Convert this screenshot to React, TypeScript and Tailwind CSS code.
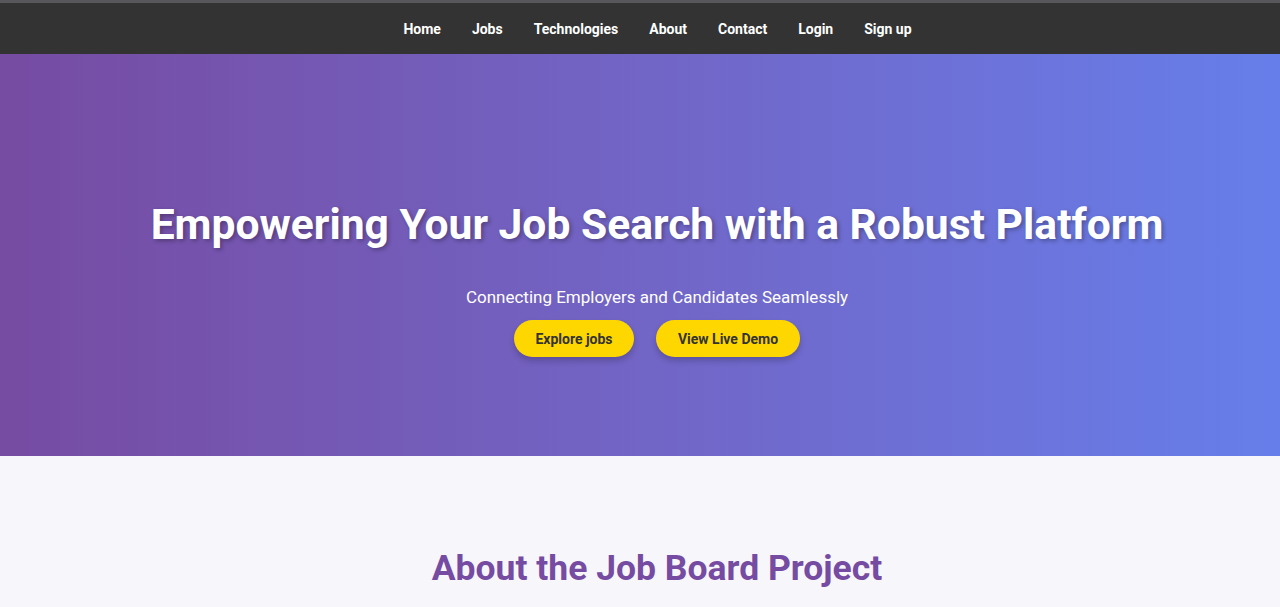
import React from "react";

export default function App() {
  const links = ["Home", "Jobs", "Technologies", "About", "Contact", "Login", "Sign up"];
  return (
    <div className="min-h-screen bg-[#f7f7fb]" style={{ fontFamily: "Roboto, 'Noto Sans', sans-serif" }}>
      <nav className="h-[54px] bg-[#333333] border-t-[3px] border-[#58585c] flex items-center justify-center pl-[35px]">
        <ul className="flex items-center gap-[31px]">
          {links.map((l) => (
            <li key={l}>
              <a className="text-white font-bold text-[14px]">{l}</a>
            </li>
          ))}
        </ul>
      </nav>
      <section className="h-[402px] bg-gradient-to-r from-[#764ba2] to-[#667eea] flex flex-col items-center pl-[34px] pt-[145px] text-white">
        <h1 className="text-[42.6px] leading-[50px] font-bold [text-shadow:2px_2px_4px_rgba(0,0,0,0.3)]">
          Empowering Your Job Search with a Robust Platform
        </h1>
        <p className="mt-[36px] text-[17px] leading-[24px]">Connecting Employers and Candidates Seamlessly</p>
        <div className="mt-[11px] flex gap-[22px]">
          <button className="h-[37px] w-[120px] rounded-full bg-[#ffd700] text-[#333] font-bold text-[14px] pt-[1px] shadow-[0_4px_6px_rgba(0,0,0,0.2)]">
            Explore jobs
          </button>
          <button className="h-[37px] w-[144px] rounded-full bg-[#ffd700] text-[#333] font-bold text-[14px] pt-[1px] shadow-[0_4px_6px_rgba(0,0,0,0.2)]">
            View Live Demo
          </button>
        </div>
      </section>
      <section className="flex flex-col items-center pl-[34px] pt-[90px]">
        <h2 className="text-[35.5px] leading-[44px] font-bold text-[#764ba2]">About the Job Board Project</h2>
      </section>
    </div>
  );
}
